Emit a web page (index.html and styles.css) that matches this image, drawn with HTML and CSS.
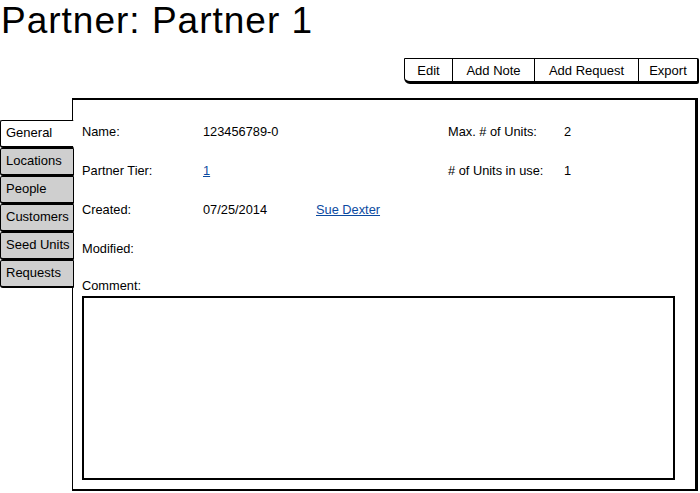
FILE: index.html
```html
<!DOCTYPE html>
<html>
<head>
<meta charset="utf-8">
<link rel="stylesheet" href="styles.css">
</head>
<body>
<h1 class="title">Partner: Partner 1</h1>
<div class="toolbar">
  <div class="btns">
    <span class="btn">Edit</span><span class="btn">Add Note</span><span class="btn">Add Request</span><span class="btn">Export</span>
  </div>
</div>
<div class="main">
  <div class="tabs">
    <div class="tab active">General</div>
    <div class="tab">Locations</div>
    <div class="tab">People</div>
    <div class="tab">Customers</div>
    <div class="tab">Seed Units</div>
    <div class="tab">Requests</div>
  </div>
  <div class="panel">
    <div class="grid">
      <span>Name:</span><span>123456789-0</span><span></span><span>Max. # of Units:</span><span>2</span>
      <span>Partner Tier:</span><span><a class="link">1</a></span><span></span><span># of Units in use:</span><span>1</span>
      <span>Created:</span><span>07/25/2014</span><span><a class="link">Sue Dexter</a></span><span></span><span></span>
      <span>Modified:</span><span></span><span></span><span></span><span></span>
    </div>
    <div class="comment-label">Comment:</div>
    <div class="textarea"></div>
  </div>
</div>
</body>
</html>
```
FILE: styles.css
```css
* { box-sizing: border-box; }
html, body { margin: 0; padding: 0; background: #fff; }
body {
  width: 700px;
  height: 493px;
  overflow: hidden;
  font-family: "Liberation Sans", Arial, sans-serif;
  color: #000;
  font-size: 12.8px;
}
.title {
  margin: 0;
  padding-left: 1px;
  font-size: 37px;
  font-weight: normal;
  line-height: 42px;
  height: 58px;
  letter-spacing: 1px;
}
.toolbar {
  display: flex;
  justify-content: flex-end;
  height: 40px;
}
.btns {
  display: flex;
  height: 26px;
  margin-right: 1px;
  border: 1px solid #000;
  border-bottom-width: 3px;
  border-right-width: 2px;
  border-radius: 1px 2px 2px 6px;
}
.btn {
  display: flex;
  align-items: center;
  justify-content: center;
  height: 22px;
  font-size: 13px;
  border-left: 1px solid #000;
}
.btn:first-child { border-left: none; width: 47px; }
.btn:nth-child(2) { width: 82px; }
.btn:nth-child(3) { width: 104px; }
.btn:nth-child(4) { width: 59px; }
.main {
  display: flex;
  height: 395px;
}
.tabs {
  width: 74px;
  padding-top: 22px;
  display: flex;
  flex-direction: column;
  position: relative;
  z-index: 1;
}
.tab {
  height: 28px;
  width: 74px;
  border: 1px solid #000;
  border-bottom-width: 2px;
  border-radius: 2px 1px 1px 3px;
  background: #cfcfcf;
  padding: 4px 0 0 5px;
  font-size: 13px;
  white-space: nowrap;
  overflow: hidden;
}
.tab.active {
  background: #fff;
  border-right-color: #fff;
  width: 74px;
}
.panel {
  flex: 1;
  margin-left: -2px;
  margin-right: 2px;
  margin-bottom: 2px;
  border: 2px solid #000;
  border-left-width: 1px;
  border-right-width: 3px;
  padding: 12px 20px 0 9px;
  display: flex;
  flex-direction: column;
}
.grid {
  display: grid;
  grid-template-columns: 121px 113px 132px 116px auto;
  grid-auto-rows: 39px;
  align-items: center;
}
.link {
  color: #0b4aa0;
  text-decoration: underline;
}
.comment-label {
  margin-top: 11px;
  height: 17px;
  line-height: 14px;
}
.textarea {
  height: 184px;
  border: 2px solid #000;
}
```
